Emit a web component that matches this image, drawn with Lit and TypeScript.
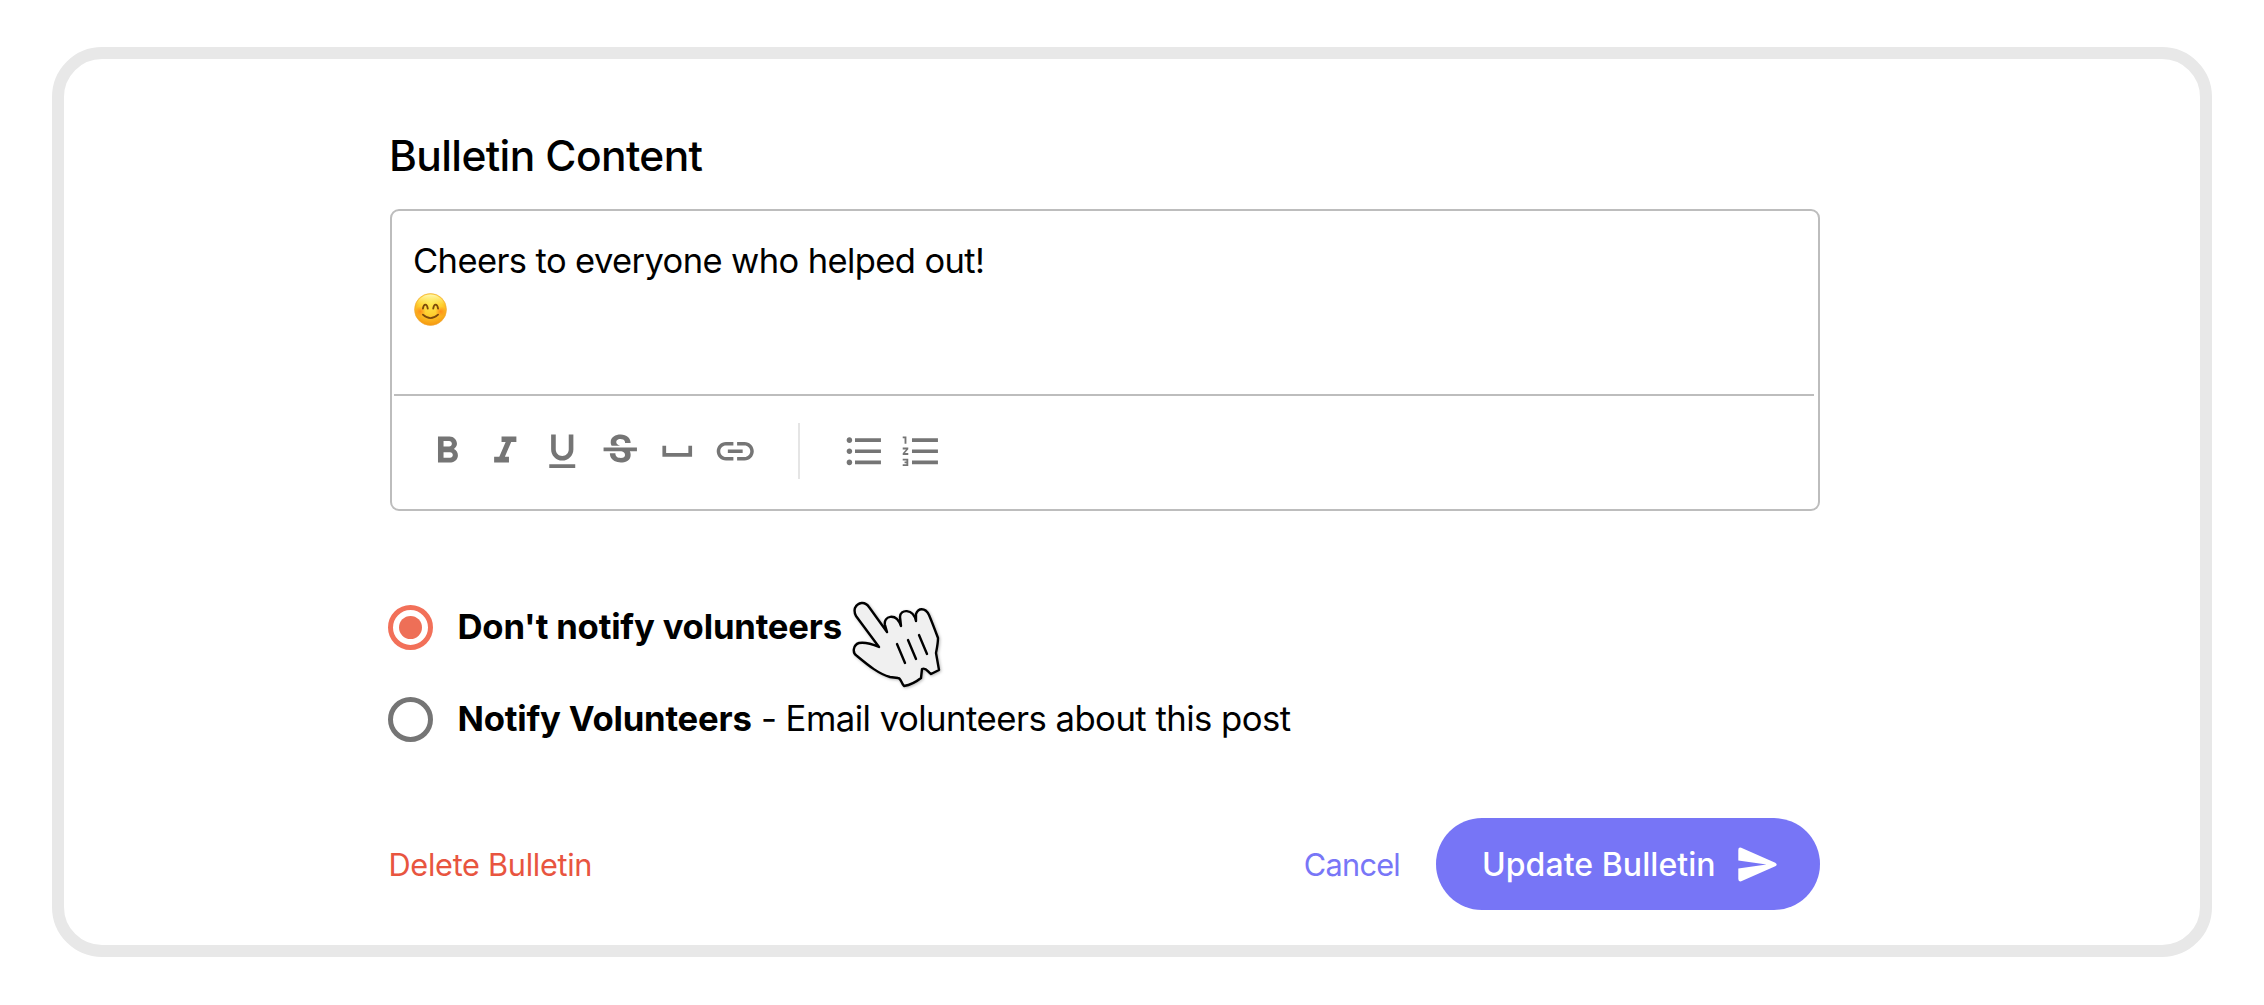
import { LitElement, html, css, svg } from "lit";
import { customElement } from "lit/decorators.js";

const icon = (body: unknown) =>
  html`<svg class="icon" viewBox="0 0 24 24" fill="currentColor">${body}</svg>`;

const bold = svg`<path d="M15.6 10.790c.97-.67 1.650-1.770 1.650-2.790 0-2.260-1.750-4-4-4H7v14h7.040c2.090 0 3.710-1.700 3.710-3.790 0-1.520-.86-2.820-2.150-3.420zM10 6.500h3c.83 0 1.500.67 1.500 1.500s-.67 1.500-1.500 1.500h-3v-3zm3.500 9H10v-3h3.500c.83 0 1.500.67 1.500 1.500s-.67 1.500-1.500 1.500z"/>`;
const italic = svg`<path d="M10 4v3h2.210l-3.420 8H6v3h8v-3h-2.210l3.420-8H18V4z"/>`;
const underline = svg`<path d="M12 17c3.310 0 6-2.690 6-6V3h-2.500v8c0 1.930-1.570 3.500-3.500 3.500S8.500 12.930 8.500 11V3H6v8c0 3.310 2.690 6 6 6zm-7 2v2h14v-2H5z"/>`;
const strike = svg`<path d="M6.850 7.080C6.850 4.370 9.450 3 12.240 3c1.640 0 3 .49 3.900 1.280.77.65 1.460 1.730 1.460 3.240h-3.010c0-.31-.05-.59-.15-.85-.29-.86-1.200-1.280-2.250-1.280-1.860 0-2.340 1.020-2.340 1.700 0 .48.25.88.74 1.210.38.25.77.48 1.410.7H7.390c-.21-.34-.54-.89-.54-1.920zM21 12v-2H3v2h9.620c1.150.45 1.960.75 1.960 1.970 0 1-.81 1.670-2.280 1.670-1.540 0-2.930-.54-2.930-2.510H6.400c0 .55.08 1.130.24 1.580.81 2.290 3.290 3.300 5.670 3.300 2.270 0 5.300-.89 5.300-4.050 0-.3-.01-1.160-.48-1.940H21V12z"/>`;
const space = svg`<path d="M18 9v4H6V9H4v6h16V9z"/>`;
const link = svg`<path d="M3.900 12c0-1.710 1.390-3.100 3.100-3.100h4V7H7c-2.760 0-5 2.240-5 5s2.240 5 5 5h4v-1.900H7c-1.710 0-3.100-1.390-3.100-3.100zM8 13h8v-2H8v2zm9-6h-4v1.900h4c1.710 0 3.100 1.390 3.100 3.100s-1.390 3.100-3.100 3.100h-4V17h4c2.760 0 5-2.240 5-5s-2.240-5-5-5z"/>`;
const bullets = svg`<path d="M4 10.500c-.83 0-1.500.67-1.500 1.500s.67 1.500 1.500 1.500 1.500-.67 1.500-1.500-.67-1.500-1.500-1.500zm0-6c-.83 0-1.500.67-1.500 1.500S3.170 7.500 4 7.500 5.500 6.830 5.500 6 4.830 4.500 4 4.500zm0 12c-.83 0-1.500.68-1.500 1.500s.68 1.500 1.500 1.500 1.500-.68 1.500-1.500-.67-1.500-1.500-1.500zM7 19h14v-2H7v2zm0-6h14v-2H7v2zm0-8v2h14V5H7z"/>`;
const numbers = svg`<path d="M2 17h2v.5H3v1h1v.5H2v1h3v-4H2v1zm1-9h1V4H2v1h1v3zm-1 3h1.800L2 13.100v.9h3v-1H3.200L5 10.900V10H2v1zm5-6v2h14V5H7zm0 14h14v-2H7v2zm0-6h14v-2H7v2z"/>`;

@customElement("app-root")
export class AppRoot extends LitElement {
  static styles = css`
    :host { display: block; box-sizing: border-box; height: 1005px; padding: 47.4px 52px 0; background: #fff; color: #000; font-family: Inter, "Liberation Sans", sans-serif; }
    * { box-sizing: border-box; }
    .frame { height: 910px; border: 12px solid #e8e8e8; border-radius: 50px; padding: 65px 380px 0 326px; background: #fff; }
    h1 { margin: 0 0 0 -1px; height: 64px; font-size: 42.5px; line-height: 64px; font-weight: 500; letter-spacing: -0.62px; white-space: nowrap; }
    .editor { width: 1430px; height: 302px; margin-top: 21px; border: 2px solid #bdbdbd; border-radius: 9px; padding: 0 4px 0 2px; }
    .body { height: 185px; padding: 25.5px 0 0 20px; font-size: 34.5px; line-height: 48px; letter-spacing: -0.6px; border-bottom: 2px solid #bdbdbd; }
    .line { margin-left: -1px; white-space: nowrap; }
    .emoji { display: block; width: 33px; height: 33px; margin-top: 8.5px; }
    .toolbar { height: 113px; display: flex; align-items: center; padding: 0 0 3px 31.3px; color: #757575; }
    .tools { display: flex; gap: 13px; }
    .icon { display: block; width: 44.5px; height: 44.5px; }
    .sep { width: 2px; height: 56px; margin: 0 41.8px 0 40.7px; background: #e5e5e5; }
    .options { margin: 94.2px 0 0 -2px; display: grid; gap: 48px; position: relative; }
    .option { display: flex; align-items: center; gap: 24.5px; height: 44px; font-size: 34.7px; letter-spacing: -0.53px; white-space: nowrap; }
    .label { padding-bottom: 2.4px; }
    .ring { width: 45px; height: 45px; border-radius: 50%; border: 5px solid #757575; display: grid; place-items: center; flex: none; }
    .ring.on { border-color: #f27059; }
    .ring.on::after { content: ""; width: 23px; height: 23px; border-radius: 50%; background: #ee6f57; }
    b { font-weight: 700; letter-spacing: -0.2px; }
    .hand { position: absolute; left: 452px; top: -15.6px; width: 120px; height: 110px; overflow: visible; filter: drop-shadow(1px 1px 1.5px rgba(0, 0, 0, .28)); }
    .actions { margin-top: 76.1px; display: flex; align-items: center; width: 1430px; height: 92px; }
    .link { font-size: 30.7px; padding-top: 2.5px; white-space: nowrap; }
    .delete { margin-left: -1.5px; color: #e8553f; letter-spacing: -0.3px; }
    .cancel { margin-left: auto; color: #7876f7; letter-spacing: -0.75px; }
    .send { margin-left: 36px; width: 384px; height: 92px; border: 0; border-radius: 46px; background: #7775f6; color: #fff; font: 500 32px Inter, "Liberation Sans", sans-serif; letter-spacing: 0.06px; display: flex; align-items: center; padding: 1px 42.5px 0 46px; justify-content: space-between; white-space: nowrap; }
    .plane { width: 39.5px; height: 35px; }
  `;

  render() {
    return html`<main class="frame">
      <h1>Bulletin Content</h1>
      <section class="editor">
        <div class="body">
          <div><span class="line">Cheers to everyone who helped out!</span></div>
          <svg class="emoji" viewBox="0 0 34 34" aria-label="😊">
            <defs>
              <radialGradient id="face" cx=".5" cy=".3" r=".72"><stop offset="0" stop-color="#ffe94f"/><stop offset=".5" stop-color="#ffd030"/><stop offset="1" stop-color="#f5930c"/></radialGradient>
              <linearGradient id="shine" x2="0" y2="1"><stop offset="0" stop-color="#fffbc0" stop-opacity=".9"/><stop offset=".35" stop-color="#fff27a" stop-opacity="0"/></linearGradient>
              <radialGradient id="blush"><stop offset="0" stop-color="#ff7a12" stop-opacity=".75"/><stop offset="1" stop-color="#ff7a12" stop-opacity="0"/></radialGradient>
            </defs>
            <circle cx="17" cy="17" r="16.500" fill="url(#face)" stroke="#f0a83a" stroke-width=".6"/>
            <circle cx="17" cy="17" r="15.500" fill="url(#shine)"/>
            <circle cx="6.500" cy="19" r="5.500" fill="url(#blush)"/><circle cx="27.500" cy="19" r="5.500" fill="url(#blush)"/>
            <path d="M9.200 16C10 10.600 13.400 10.600 14.200 16M19.800 16C20.600 10.600 24 10.600 24.800 16M9.200 22.300Q17 29.500 24.800 22.300" fill="none" stroke="#7d4a0c" stroke-width="1.900" stroke-linecap="round"/>
          </svg>
        </div>
        <div class="toolbar">
          <div class="tools">${[bold, italic, underline, strike, space, link].map((i) => icon(i))}</div>
          <div class="sep"></div>
          <div class="tools">${[bullets, numbers].map((i) => icon(i))}</div>
        </div>
      </section>
      <section class="options">
        <div class="option"><span class="ring on"></span><span class="label"><b>Don't notify volunteers</b></span></div>
        <div class="option"><span class="ring"></span><span class="label"><b>Notify Volunteers</b> - Email volunteers about this post</span></div>
        <svg class="hand" viewBox="0 0 120 110">
          <path d="M47 42L29 17C25 11 18 12 15 18C14 21 15 24 16 26L39 57C32 54 25 52 19 53C13 55 12 63 17 66C29 76 39 84 50 87L58 88C61 88 61 93 64 96C70 95 76 92 81 88L82 79C86 77 88 82 91 84L99 80L96 63C97 58 98 53 98 48C95 40 92 32 89 25C85 17 78 18 76 24L76 31C73 18 60 19 60 27L61 36C56 22 43 26 45 35Z" fill="#f0f0f0" stroke="#000" stroke-width="2.400" stroke-linejoin="round"/>
          <path d="M57 54l8 19M68 50l8 19M79 45l8 19" fill="none" stroke="#000" stroke-width="2.400" stroke-linecap="round"/>
        </svg>
      </section>
      <footer class="actions">
        <span class="link delete">Delete Bulletin</span>
        <span class="link cancel">Cancel</span>
        <button class="send"><span>Update Bulletin</span>
          <svg class="plane" viewBox="0 0 40 36"><path d="M0 3Q0 0 3 .8L38 16.200Q41 18 38 19.800L3 35.200Q0 36 0 33V22L29 18L0 14Z" fill="#fff"/></svg>
        </button>
      </footer>
    </main>`;
  }
}
